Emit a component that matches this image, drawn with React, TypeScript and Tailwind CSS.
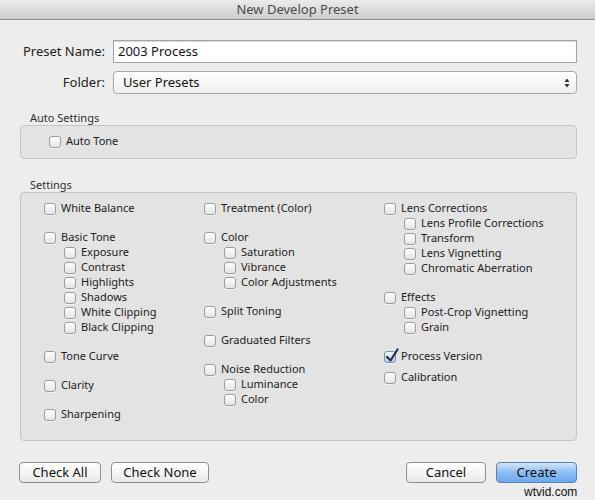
import React from "react";

type Item = { label: string; checked?: boolean; subs?: string[] };

const font = { fontFamily: '"Noto Sans", "DejaVu Sans", sans-serif' };

const columns: Item[][] = [
  [
    { label: "White Balance" },
    { label: "Basic Tone", subs: ["Exposure", "Contrast", "Highlights", "Shadows", "White Clipping", "Black Clipping"] },
    { label: "Tone Curve" },
    { label: "Clarity" },
    { label: "Sharpening" },
  ],
  [
    { label: "Treatment (Color)" },
    { label: "Color", subs: ["Saturation", "Vibrance", "Color Adjustments"] },
    { label: "Split Toning" },
    { label: "Graduated Filters" },
    { label: "Noise Reduction", subs: ["Luminance", "Color"] },
  ],
  [
    { label: "Lens Corrections", subs: ["Lens Profile Corrections", "Transform", "Lens Vignetting", "Chromatic Aberration"] },
    { label: "Effects", subs: ["Post-Crop Vignetting", "Grain"] },
  ],
];

function Box({ checked }: { checked?: boolean }) {
  return (
    <span
      className={
        "relative w-[12px] h-[12px] shrink-0 rounded-[3px] border bg-gradient-to-b shadow-[0_1px_0_rgba(255,255,255,0.6)] " +
        (checked ? "border-[#7f8fa8] from-[#eef4fb] to-[#bcd0e8]" : "border-[#9b9b9b] from-[#ffffff] to-[#e4e4e4]")
      }
    >
      {checked && (
        <svg className="absolute left-[0px] top-[-4px]" width="14" height="15" viewBox="0 0 14 15">
          <path d="M2 9 L5.5 12.5 L12.5 1.5" fill="none" stroke="#1d2f55" strokeWidth="2.2" strokeLinecap="round" strokeLinejoin="round" />
        </svg>
      )}
    </span>
  );
}

function Check({ label, checked }: { label: string; checked?: boolean }) {
  return (
    <div className="flex items-center h-[15px] gap-[5px] text-[11px] text-[#1c1c1c] whitespace-nowrap">
      <Box checked={checked} />
      <span>{label}</span>
    </div>
  );
}

function Group({ item }: { item: Item }) {
  return (
    <div className="flex flex-col">
      <Check label={item.label} checked={item.checked} />
      {item.subs && (
        <div className="flex flex-col pl-[20px]">
          {item.subs.map((s) => (
            <Check key={s} label={s} />
          ))}
        </div>
      )}
    </div>
  );
}

function Button({ children, primary, cls }: { children: React.ReactNode; primary?: boolean; cls: string }) {
  return (
    <button
      className={
        "h-[21px] rounded-[4px] border text-[13px] leading-none text-[#111] " +
        cls +
        (primary
          ? " border-[#5d80b3] bg-gradient-to-b from-[#d3e6fb] via-[#8cbdf2] to-[#6aa9ec]"
          : " border-[#8e8e8e] bg-gradient-to-b from-[#ffffff] to-[#e9e9e9]")
      }
    >
      {children}
    </button>
  );
}

export default function App() {
  return (
    <div className="relative w-[595px] h-[500px] bg-[#ededed] overflow-hidden" style={font}>
      {/* title bar */}
      <div className="h-[20px] border-b border-[#8c8c8c] bg-gradient-to-b from-[#ebebeb] to-[#cdcdcd] flex items-center justify-center text-[13px] text-[#4a4a4a]">
        New Develop Preset
      </div>

      {/* name + folder */}
      <div className="mt-[20px] flex flex-col gap-[8px] pr-[18px]">
        <div className="flex items-center h-[23px]">
          <label className="w-[105px] text-right text-[13px] text-[#1c1c1c]">Preset Name:</label>
          <div className="ml-[8px] flex-1 h-[23px] border border-[#a2a2a2] bg-white shadow-[inset_0_1px_1px_rgba(0,0,0,0.15)] flex items-center pl-[4px] text-[13px] text-[#111]">
            2003 Process
          </div>
        </div>
        <div className="flex items-center h-[23px]">
          <label className="w-[105px] text-right text-[13px] text-[#1c1c1c]">Folder:</label>
          <div className="ml-[8px] flex-1 h-[23px] rounded-[4px] border border-[#a7a7a7] bg-gradient-to-b from-[#ffffff] to-[#efefef] flex items-center justify-between pl-[9px] pr-[6px] text-[13px] text-[#111]">
            <span>User Presets</span>
            <svg width="6" height="10" viewBox="0 0 6 10">
              <path d="M3 0.5 L5.5 4 L0.5 4 Z" fill="#333" />
              <path d="M3 9.5 L5.5 6 L0.5 6 Z" fill="#333" />
            </svg>
          </div>
        </div>
      </div>

      {/* auto settings */}
      <div className="mt-[17px] ml-[30px] h-[13px] text-[11px] text-[#2d2d2d] leading-[13px]">Auto Settings</div>
      <div className="mt-[1px] ml-[20px] mr-[18px] h-[34px] rounded-[4px] border border-[#c6c6c6] bg-[#e3e3e3] flex items-center pl-[28px] pb-[1px]">
        <Check label="Auto Tone" />
      </div>

      {/* settings */}
      <div className="mt-[19px] ml-[30px] h-[13px] text-[11px] text-[#2d2d2d] leading-[13px]">Settings</div>
      <div className="mt-[1px] ml-[20px] mr-[18px] h-[249px] rounded-[4px] border border-[#c6c6c6] bg-[#e3e3e3] flex pl-[23px] pt-[8px]">
        <div className="w-[160px] flex flex-col gap-[14px]">
          {columns[0].map((it) => (
            <Group key={it.label} item={it} />
          ))}
        </div>
        <div className="w-[180px] flex flex-col gap-[14px]">
          {columns[1].map((it) => (
            <Group key={it.label} item={it} />
          ))}
        </div>
        <div className="flex flex-col gap-[14px]">
          {columns[2].map((it) => (
            <Group key={it.label} item={it} />
          ))}
          <div className="flex flex-col gap-[6px]">
            <Check label="Process Version" checked />
            <Check label="Calibration" />
          </div>
        </div>
      </div>

      {/* buttons */}
      <div className="mt-[21px] ml-[19px] mr-[18px] h-[21px] flex items-center">
        <Button cls="w-[82px]">Check All</Button>
        <Button cls="w-[98px] ml-[10px]">Check None</Button>
        <div className="ml-auto flex gap-[10px]">
          <Button cls="w-[80px]">Cancel</Button>
          <Button cls="w-[81px]" primary>
            Create
          </Button>
        </div>
      </div>

      {/* watermark */}
      <div className="absolute left-[524px] top-[485px] text-[12px] leading-[14px] text-[#111]" style={{ fontFamily: '"Liberation Sans", Arial, sans-serif' }}>
        wtvid.com
      </div>
    </div>
  );
}
